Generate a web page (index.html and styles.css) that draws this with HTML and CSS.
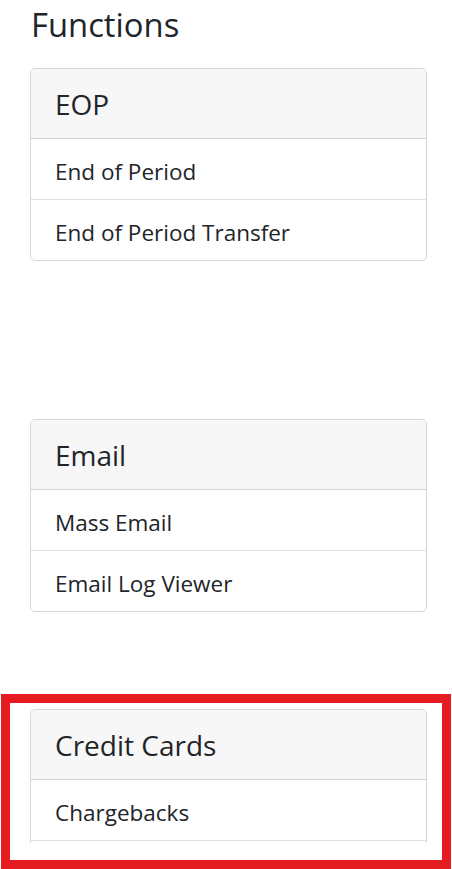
FILE: index.html
```html
<!DOCTYPE html>
<html lang="en">
<head>
<meta charset="utf-8">
<title>Functions</title>
<link rel="stylesheet" href="styles.css">
</head>
<body>
<main class="page">
  <h2 class="title">Functions</h2>

  <section class="card card-first">
    <div class="card-header">EOP</div>
    <div class="list">
      <div class="item">End of Period</div>
      <div class="item">End of Period Transfer</div>
    </div>
  </section>

  <section class="card card-second">
    <div class="card-header">Email</div>
    <div class="list">
      <div class="item">Mass Email</div>
      <div class="item">Email Log Viewer</div>
    </div>
  </section>
</main>

<div class="highlight">
  <div class="clip">
    <section class="card">
      <div class="card-header">Credit Cards</div>
      <div class="list">
        <div class="item">Chargebacks</div>
        <div class="item item-empty"></div>
      </div>
    </section>
  </div>
</div>
</body>
</html>
```

FILE: styles.css
```css
html, body {
  margin: 0;
  padding: 0;
  background: #ffffff;
  overflow: hidden;
}

body {
  font-family: "Open Sans", "Noto Sans", "Liberation Sans", sans-serif;
  color: #212529;
}

.page {
  padding: 5px 25px 0 30px;
}

.title {
  margin: 0 0 23px 1px;
  font-size: 32.8px;
  line-height: 40px;
  font-weight: 400;
}

.card {
  border: 1px solid #d6d6d6;
  border-radius: 5px;
  background: #ffffff;
  overflow: hidden;
}

.card-second {
  margin-top: 158px;
}

.card-header {
  background: #f7f7f7;
  border-bottom: 1px solid #d2d2d2;
  padding: 14px 24px 13px;
  font-size: 28px;
  line-height: 42px;
}

.item {
  padding: 16px 24px 11px;
  font-size: 22.5px;
  line-height: 33px;
}

.item-empty {
  height: 33px;
}

.item + .item {
  border-top: 1px solid #e0e0e0;
}

.highlight {
  margin: 82px 1px 0 1px;
  border: 9px solid #e61c23;
  padding: 6px 15px 17px 20px;
  background: #ffffff;
}

.clip {
  height: 134px;
  overflow: hidden;
}
```
